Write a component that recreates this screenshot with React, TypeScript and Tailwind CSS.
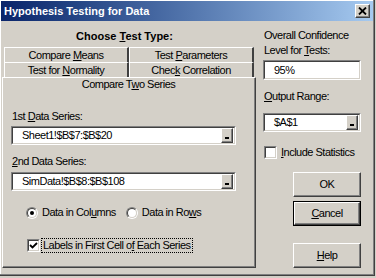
import React from "react";

const raised =
  "bg-[#d4d0c8] border border-t-white border-l-white border-r-[#404040] border-b-[#404040] shadow-[inset_-1px_-1px_0_#808080]";

function MiniBtn() {
  return (
    <div className={`w-[12px] h-[15px] mr-[1px] flex items-end justify-center pb-[3px] ${raised}`}>
      <div className="w-[4px] h-[2px] bg-black" />
    </div>
  );
}

function Field({ value, btn, tall }: { value: string; btn?: boolean; tall?: boolean }) {
  return (
    <div
      className={`flex border border-t-[#808080] border-l-[#808080] border-r-white border-b-white ${tall ? "h-[20px]" : "h-[19px]"}`}
    >
      <div className="flex-1 flex items-center bg-white border border-t-[#404040] border-l-[#404040] border-r-[#d4d0c8] border-b-[#d4d0c8] pl-[9px]">
        <span className="flex-1 leading-[13px]">{value}</span>
        {btn && <MiniBtn />}
      </div>
    </div>
  );
}

function Check({ checked }: { checked?: boolean }) {
  return (
    <div className="w-[13px] h-[13px] border border-t-[#808080] border-l-[#808080] border-r-white border-b-white flex">
      <div className="flex-1 bg-white border border-t-[#404040] border-l-[#404040] border-r-[#d4d0c8] border-b-[#d4d0c8] flex items-center justify-center">
        {checked && (
          <svg width="9" height="9" viewBox="0 0 9 9">
            <path d="M1 4 L3.5 6.5 L8 2" stroke="black" strokeWidth="1.8" fill="none" />
          </svg>
        )}
      </div>
    </div>
  );
}

function Radio({ on }: { on?: boolean }) {
  return (
    <div className="w-[12px] h-[12px] rounded-full border border-t-[#808080] border-l-[#808080] border-r-white border-b-white flex">
      <div className="flex-1 rounded-full bg-white border border-t-[#404040] border-l-[#404040] border-r-[#d4d0c8] border-b-[#d4d0c8] flex items-center justify-center">
        {on && <div className="w-[4px] h-[4px] rounded-full bg-black" />}
      </div>
    </div>
  );
}

function Tab({ children }: { children: React.ReactNode }) {
  return (
    <div className="flex-1 h-full flex items-center justify-center border-t border-l border-t-white border-l-white border-r-2 border-r-[#404040] leading-[13px]">
      <span>{children}</span>
    </div>
  );
}

function Btn({ children, def, className }: { children: React.ReactNode; def?: boolean; className?: string }) {
  return (
    <div className={`w-[68px] h-[25px] ml-[30px] ${def ? "border border-black flex" : "flex"} ${className ?? ""}`}>
      <div className={`flex-1 flex items-center justify-center ${raised}`}>
        <span>{children}</span>
      </div>
    </div>
  );
}

export default function App() {
  return (
    <div className="w-[376px] h-[278px] bg-[#d4d0c8] font-['Liberation_Sans',Arial,sans-serif] text-[11px] tracking-[-0.5px] text-black">
      <div className="w-[375px] h-[276px] flex flex-col border-r border-b border-r-[#404040] border-b-[#404040] shadow-[inset_-1px_-1px_0_#808080,inset_1px_1px_0_#fff]">
        {/* title bar */}
        <div className="h-[20px] mt-[1px] mx-[1px] flex items-center justify-between pl-[3px] pr-[3px] bg-gradient-to-r from-[#0a246a] to-[#a6caf0]">
          <span className="text-white font-bold tracking-normal leading-[13px]">Hypothesis Testing for Data</span>
          <div className={`w-[15px] h-[14px] flex items-center justify-center ${raised}`}>
            <svg width="9" height="8" viewBox="0 0 9 8">
              <path d="M1 0.5 L8 7.5 M8 0.5 L1 7.5" stroke="black" strokeWidth="1.8" />
            </svg>
          </div>
        </div>

        <div className="flex">
          {/* left column */}
          <div className="w-[254px] ml-[2px] flex flex-col">
            <div className="h-[26px] pt-[9px] pr-[9px] text-center font-bold tracking-normal leading-[13px]">
              Choose <u>T</u>est Type:
            </div>
            <div className="h-[15px] ml-[2px] mr-[2px] flex">
              <Tab>
                Compare <u>M</u>eans
              </Tab>
              <Tab>
                Test <u>P</u>arameters
              </Tab>
            </div>
            <div className="h-[15px] ml-[2px] mr-[2px] flex">
              <Tab>
                Test for <u>N</u>ormality
              </Tab>
              <Tab>
                Chec<u>k</u> Correlation
              </Tab>
            </div>
            <div className="h-[191px] flex flex-col border-t border-l border-t-white border-l-white border-r border-b border-r-[#404040] border-b-[#404040] shadow-[inset_-1px_-1px_0_#808080]">
              <div className="h-[14px] leading-[13px] text-center pr-[1px]">
                Compare T<u>w</u>o Series
              </div>
              <div className="mt-[18px] ml-[9px] leading-[13px] h-[13px]">
                1st <u>D</u>ata Series:
              </div>
              <div className="mt-[3px] ml-[8px] w-[225px]">
                <Field value="Sheet1!$B$7:$B$20" btn />
              </div>
              <div className="mt-[10px] ml-[9px] leading-[13px] h-[13px]">
                <u>2</u>nd Data Series:
              </div>
              <div className="mt-[4px] ml-[8px] w-[225px]">
                <Field value="SimData!$B$8:$B$108" btn />
              </div>
              <div className="mt-[15px] ml-[23px] h-[13px] flex items-center">
                <Radio on />
                <span className="ml-[4px] leading-[13px]">
                  Data in Col<u>u</u>mns
                </span>
                <div className="ml-[10px]">
                  <Radio />
                </div>
                <span className="ml-[4px] leading-[13px]">
                  Data in Ro<u>w</u>s
                </span>
              </div>
              <div className="mt-[19px] ml-[24px] h-[15px] flex items-center">
                <Check checked />
                <span className="ml-[1px] px-[1px] leading-[13px] border border-dotted border-black">
                  Labels in First Cell o<u>f</u> Each Series
                </span>
              </div>
            </div>
          </div>

          {/* right column */}
          <div className="w-[98px] ml-[7px] flex flex-col">
            <div className="pt-[7px] pl-[1px] leading-[15px]">
              Overall Confidence
              <br />
              Level for <u>T</u>ests:
            </div>
            <div className="mt-[2px]">
              <Field value="95%" tall />
            </div>
            <div className="mt-[10px] pl-[1px] leading-[13px] h-[13px]">
              <u>O</u>utput Range:
            </div>
            <div className="mt-[10px]">
              <Field value="$A$1" btn />
            </div>
            <div className="mt-[14px] ml-[1px] h-[13px] flex items-center">
              <Check />
              <span className="ml-[4px] leading-[13px]">
                <u>I</u>nclude Statistics
              </span>
            </div>
            <Btn className="mt-[13px]">OK</Btn>
            <Btn def className="mt-[4px]">
              <u>C</u>ancel
            </Btn>
            <Btn className="mt-[17px]">
              <u>H</u>elp
            </Btn>
          </div>
        </div>
      </div>
    </div>
  );
}
